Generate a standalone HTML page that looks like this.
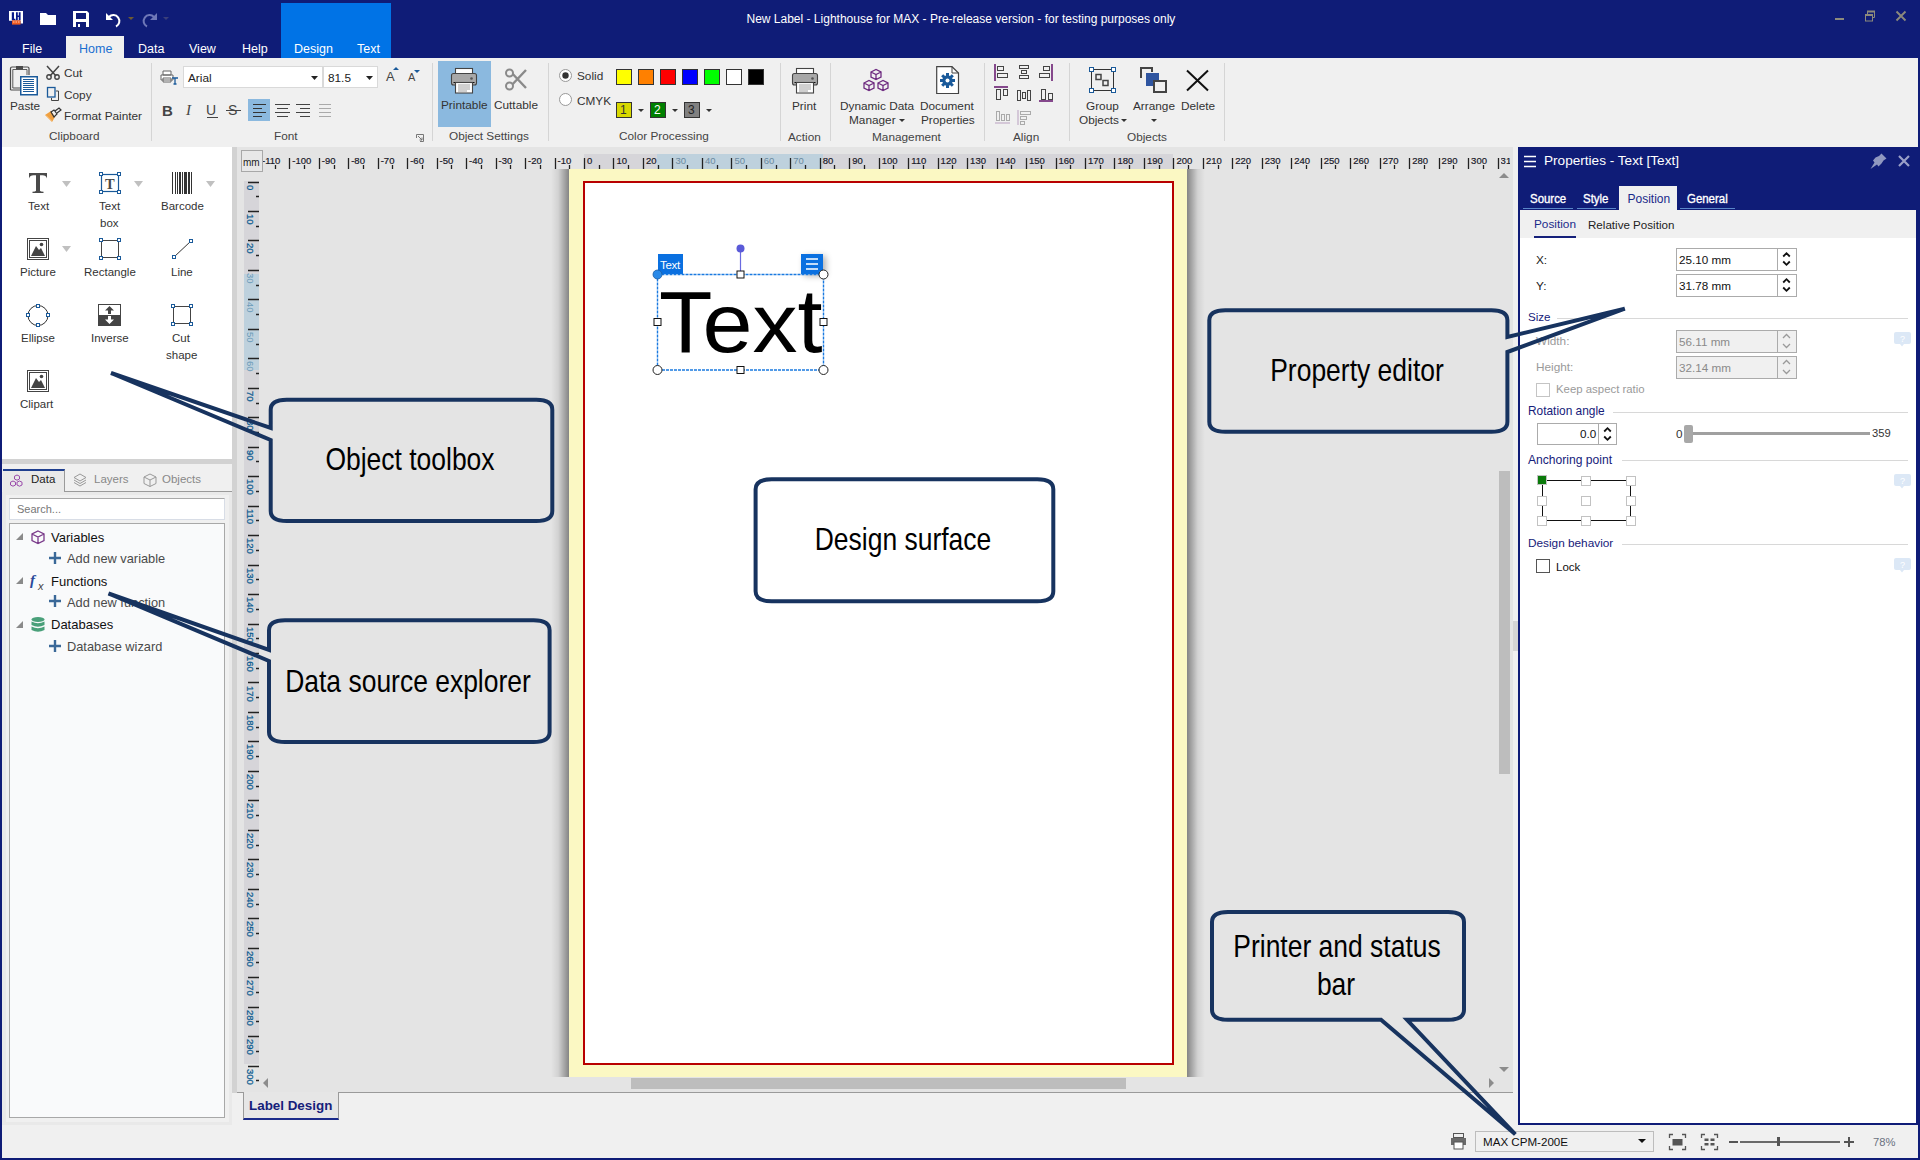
<!DOCTYPE html>
<html><head><meta charset="utf-8">
<style>
*{box-sizing:border-box;margin:0;padding:0}
html,body{width:1920px;height:1160px;overflow:hidden;background:#f0f0f0;font-family:"Liberation Sans",sans-serif;color:#1e1e1e}
.a{position:absolute}
.t{position:absolute;white-space:nowrap;line-height:1}
svg{position:absolute;overflow:visible}
</style></head><body>
<!-- window frame -->
<div class="a" style="left:0;top:0;width:1920px;height:58px;background:#0f1c77"></div>
<div class="a" style="left:0;top:0;width:2px;height:1160px;background:#0f1c77"></div>
<div class="a" style="left:1918px;top:0;width:2px;height:1160px;background:#0f1c77"></div>
<div class="a" style="left:0;top:1158px;width:1920px;height:2px;background:#0f1c77"></div>
<!-- contextual tab area -->
<div class="a" style="left:281px;top:3px;width:110px;height:55px;background:#0073e6"></div>
<div class="t" style="left:746.5px;top:13px;font-size:12px;color:#fff">New Label - Lighthouse for MAX - Pre-release version - for testing purposes only</div>
<!-- tabs -->
<div class="a" style="left:66px;top:36px;width:58px;height:22px;background:#f0f0f0"></div>
<div class="t" style="left:22px;top:43px;font-size:12.5px;color:#fff">File</div>
<div class="t" style="left:79px;top:43px;font-size:12.5px;color:#1a6fd0">Home</div>
<div class="t" style="left:138px;top:43px;font-size:12.5px;color:#fff">Data</div>
<div class="t" style="left:189px;top:43px;font-size:12.5px;color:#fff">View</div>
<div class="t" style="left:242px;top:43px;font-size:12.5px;color:#fff">Help</div>
<div class="t" style="left:294px;top:43px;font-size:12.5px;color:#fff">Design</div>
<div class="t" style="left:357px;top:43px;font-size:12.5px;color:#fff">Text</div>
<!-- ribbon -->
<div class="a" style="left:2px;top:58px;width:1916px;height:89px;background:#f0f0f0"></div>

<!-- ===== quick access ===== -->
<svg style="left:9px;top:11px" width="15" height="14">
 <path d="M0 0H14V12.6H11.5V9.8H0Z" fill="#fff"/>
 <path d="M2.8 1.2H5V7.8H6.4V9.2H2.8Z" fill="#0a1a8a"/>
 <path d="M7 1.2H8.8V4.6H9.8V1.2H11.6V9.2H9.8V6H8.8V9.2H7Z" fill="#0a1a8a"/>
 <rect x="3" y="9.3" width="8.5" height="4.3" fill="#f05a20"/>
 <path d="M4 11H10.5" stroke="#ffd0b0" stroke-width="1.2" stroke-dasharray="1.5 1"/>
</svg>
<svg style="left:40px;top:13px" width="17" height="13"><path d="M0 0H6L8 2H16V12H0Z" fill="#fff"/></svg>
<svg style="left:73px;top:11px" width="17" height="17"><path d="M0 0H14L16 2V16H0Z" fill="#fff"/><rect x="3" y="2" width="10" height="6" fill="#0f1c77"/><rect x="3" y="11" width="10" height="5" fill="#0f1c77"/><rect x="5" y="13" width="2" height="3" fill="#fff"/></svg>
<svg style="left:106px;top:12px" width="18" height="16"><path d="M3 5 A6 6 0 1 1 10 14.5" fill="none" stroke="#fff" stroke-width="2"/><path d="M0 1V8H7Z" fill="#fff"/></svg>
<svg style="left:128px;top:17px" width="6" height="4"><path d="M0 0H6L3 3Z" fill="#6e5a30"/></svg>
<svg style="left:140px;top:12px" width="18" height="16"><path d="M14 5 A6 6 0 1 0 7 14.5" fill="none" stroke="#6f78b8" stroke-width="2"/><path d="M17 1V8H10Z" fill="#6f78b8"/></svg>
<svg style="left:163px;top:17px" width="6" height="4"><path d="M0 0H6L3 3Z" fill="#3a3f7a"/></svg>
<!-- window controls -->
<div class="a" style="left:1835px;top:18px;width:9px;height:2px;background:#8c8a7c"></div>
<svg style="left:1864px;top:10px" width="12" height="12"><path d="M3.5 4V1.5H10.5V7.5H8.5" fill="none" stroke="#8c8a7c" stroke-width="1"/><path d="M3 1.5H11" stroke="#8c8a7c" stroke-width="2"/><rect x="1.5" y="5.5" width="7" height="5.5" fill="none" stroke="#8c8a7c" stroke-width="1"/><path d="M1 5H9" stroke="#8c8a7c" stroke-width="2"/></svg>
<svg style="left:1895px;top:10px" width="12" height="12"><path d="M1.5 1.5L10.5 10.5M10.5 1.5L1.5 10.5" stroke="#8c8a7c" stroke-width="1.9"/></svg>

<!-- ===== ribbon: Clipboard ===== -->
<svg style="left:9px;top:65px" width="30" height="31">
 <path d="M1.5 25V3.5Q1.5 2 3 2H7.5M13.5 2H18.5Q20 2 20 3.5V10" fill="none" stroke="#4a4a4a" stroke-width="1.2"/>
 <path d="M3.8 23V4.5H18V10" fill="none" stroke="#4a4a4a" stroke-width="0.9"/>
 <path d="M1.5 25H11M3.8 23H11" fill="none" stroke="#4a4a4a" stroke-width="1"/>
 <rect x="7" y="1" width="7" height="3.5" fill="#4a4a4a"/>
 <rect x="11.75" y="11.75" width="16.5" height="18" fill="#fff" stroke="#1a5a9a" stroke-width="1.5"/>
 <path d="M14 14.5H25M14 16.5H25M14 18.5H25M14 20.5H25M14 22.5H25M14 24.5H25M14 26.5H25" stroke="#1a5a9a" stroke-width="1"/>
</svg>
<div class="t" style="left:10px;top:101px;font-size:11.8px;color:#333">Paste</div>
<svg style="left:46px;top:66px" width="15" height="14"><path d="M1 0L10 10M13 0L4 10" stroke="#444" stroke-width="1.5"/><circle cx="3" cy="11" r="2.2" fill="none" stroke="#444" stroke-width="1.4"/><circle cx="11" cy="11" r="2.2" fill="none" stroke="#444" stroke-width="1.4"/></svg>
<div class="t" style="left:64px;top:68px;font-size:11.8px;color:#333">Cut</div>
<svg style="left:47px;top:87px" width="13" height="15"><rect x="0.5" y="0.5" width="7.5" height="9.5" fill="none" stroke="#1a5a9a" stroke-width="1.3"/><path d="M9 4H11.5V13.5H4.5V11" fill="none" stroke="#444" stroke-width="1"/></svg>
<div class="t" style="left:64px;top:90px;font-size:11.8px;color:#333">Copy</div>
<svg style="left:45px;top:108px" width="17" height="16"><path d="M0 7L6 3L10 9L7 14Z" fill="#f0a040"/><path d="M1 7.5L6.5 13" stroke="#f7c890" stroke-width="1"/><path d="M6 4L9 2L12 6L9 9Z" fill="none" stroke="#333" stroke-width="1.2"/><path d="M10 3L14 0L16 2L12 5" fill="none" stroke="#333" stroke-width="1.2"/></svg>
<div class="t" style="left:64px;top:111px;font-size:11.8px;color:#333">Format Painter</div>
<div class="t" style="left:49px;top:131px;font-size:11.8px;color:#444">Clipboard</div>
<div class="a" style="left:151px;top:63px;width:1px;height:78px;background:#d5d5d5"></div>

<!-- ===== ribbon: Font ===== -->
<svg style="left:161px;top:70px" width="18" height="15"><path d="M2 1H10V5H2Z M0 5H12V10H0Z M2 8H10V12H2Z" fill="#fff" stroke="#666" stroke-width="1"/><path d="M11 8H17M14 8V14M12.5 14H15.5" stroke="#1a5a9a" stroke-width="1.3"/></svg>
<div class="a" style="left:183px;top:66px;width:140px;height:22px;background:#fff;border:1px solid #d9d9d9"></div>
<div class="t" style="left:188px;top:73px;font-size:11.8px;color:#222">Arial</div>
<svg style="left:311px;top:76px" width="7" height="5"><path d="M0 0H7L3.5 4Z" fill="#222"/></svg>
<div class="a" style="left:323px;top:66px;width:55px;height:22px;background:#fff;border:1px solid #d9d9d9"></div>
<div class="t" style="left:328px;top:73px;font-size:11.8px;color:#222">81.5</div>
<svg style="left:366px;top:76px" width="7" height="5"><path d="M0 0H7L3.5 4Z" fill="#222"/></svg>
<div class="t" style="left:386px;top:70px;font-size:13px;color:#444">A</div>
<svg style="left:393px;top:67px" width="6" height="4"><path d="M0 3H6L3 0Z" fill="#1a5a9a"/></svg>
<div class="t" style="left:408px;top:72px;font-size:11px;color:#444">A</div>
<svg style="left:414px;top:70px" width="6" height="4"><path d="M0 0H6L3 3Z" fill="#1a5a9a"/></svg>
<div class="t" style="left:162px;top:103px;font-size:15px;font-weight:bold;color:#444">B</div>
<div class="t" style="left:186px;top:103px;font-size:15px;font-style:italic;font-family:'Liberation Serif',serif;color:#444">I</div>
<div class="t" style="left:206px;top:103px;font-size:14px;color:#444">U</div>
<div class="a" style="left:207px;top:117px;width:11px;height:1px;background:#444"></div>
<div class="t" style="left:228px;top:103px;font-size:14px;color:#444">S</div>
<div class="a" style="left:226px;top:110px;width:15px;height:1px;background:#444"></div>
<div class="a" style="left:248px;top:99px;width:22px;height:22px;background:#8bb9df"></div>
<svg style="left:253px;top:104px" width="80" height="14">
 <path d="M0 0.5H13M0 4.5H9M0 8.5H13M0 12.5H9" stroke="#333" stroke-width="1.2"/>
 <path d="M22 0.5H37M24 4.5H35M22 8.5H37M24 12.5H35" stroke="#444" stroke-width="1.2"/>
 <path d="M43 0.5H57M47 4.5H57M43 8.5H57M47 12.5H57" stroke="#444" stroke-width="1.2"/>
 <path d="M66 0.5H78M66 4.5H78M66 8.5H78M66 12.5H78" stroke="#aaa" stroke-width="1.2"/>
</svg>
<div class="t" style="left:274px;top:131px;font-size:11.8px;color:#444">Font</div>
<svg style="left:416px;top:134px" width="8" height="8"><path d="M0.5 4V0.5H7.5V7.5H4" fill="none" stroke="#777"/><path d="M2 2L6 6M6 3.5V6H3.5" fill="none" stroke="#777"/></svg>
<div class="a" style="left:432px;top:63px;width:1px;height:78px;background:#d5d5d5"></div>

<!-- ===== ribbon: Object Settings ===== -->
<div class="a" style="left:438px;top:61px;width:53px;height:66px;background:#8bb9df"></div>
<svg style="left:450px;top:67px" width="28" height="27">
 <rect x="5.5" y="1.5" width="17" height="5.5" fill="#fff" stroke="#444" stroke-width="1.1"/>
 <rect x="1.5" y="6.5" width="25" height="11.5" rx="2" fill="#a8a8a8" stroke="#444" stroke-width="1.1"/>
 <circle cx="21.5" cy="11.5" r="1.3" fill="#555"/>
 <path d="M3.5 15.5H24.5" stroke="#111" stroke-width="1"/>
 <rect x="5.5" y="15.5" width="17" height="10.5" fill="#fff" stroke="#444" stroke-width="1.1"/>
 <path d="M8 18H20M8 20H20M8 22H20M8 24H17" stroke="#888" stroke-width="0.8"/>
</svg>
<div class="t" style="left:441px;top:100px;font-size:11.8px;color:#333">Printable</div>
<svg style="left:505px;top:68px" width="23" height="24"><path d="M4 20L21 2M4 2L21 20" stroke="#8a8a8a" stroke-width="2.4"/><circle cx="4.5" cy="5" r="3.5" fill="#f0f0f0" stroke="#8a8a8a" stroke-width="2"/><circle cx="4.5" cy="18" r="3.5" fill="#f0f0f0" stroke="#8a8a8a" stroke-width="2"/></svg>
<div class="t" style="left:494px;top:100px;font-size:11.8px;color:#333">Cuttable</div>
<div class="t" style="left:449px;top:131px;font-size:11.8px;color:#444">Object Settings</div>
<div class="a" style="left:548px;top:63px;width:1px;height:78px;background:#d5d5d5"></div>

<!-- ===== ribbon: Color Processing ===== -->
<svg style="left:559px;top:69px" width="14" height="38"><circle cx="6.5" cy="6.5" r="6" fill="#fff" stroke="#999" stroke-width="1"/><circle cx="6.5" cy="6.5" r="3.2" fill="#333"/><circle cx="6.5" cy="30.5" r="6" fill="#fff" stroke="#999" stroke-width="1"/></svg>
<div class="t" style="left:577px;top:71px;font-size:11.8px;color:#333">Solid</div>
<div class="t" style="left:577px;top:96px;font-size:11.8px;color:#333">CMYK</div>
<div class="a" style="left:616px;top:69px;width:16px;height:16px;background:#ffff00;border:1px solid #333"></div>
<div class="a" style="left:638px;top:69px;width:16px;height:16px;background:#ff8000;border:1px solid #333"></div>
<div class="a" style="left:660px;top:69px;width:16px;height:16px;background:#ff0000;border:1px solid #333"></div>
<div class="a" style="left:682px;top:69px;width:16px;height:16px;background:#0000ff;border:1px solid #333"></div>
<div class="a" style="left:704px;top:69px;width:16px;height:16px;background:#00ff00;border:1px solid #333"></div>
<div class="a" style="left:726px;top:69px;width:16px;height:16px;background:#ffffff;border:1px solid #333"></div>
<div class="a" style="left:748px;top:69px;width:16px;height:16px;background:#000000;border:1px solid #333"></div>
<div class="a" style="left:616px;top:102px;width:16px;height:16px;background:#d8d800;border:1px solid #333"></div>
<div class="t" style="left:620px;top:104px;font-size:12px;color:#333">1</div>
<svg style="left:638px;top:109px" width="6" height="4"><path d="M0 0H6L3 3Z" fill="#333"/></svg>
<div class="a" style="left:650px;top:102px;width:16px;height:16px;background:#008000;border:1px solid #333"></div>
<div class="t" style="left:654px;top:104px;font-size:12px;color:#fff">2</div>
<svg style="left:672px;top:109px" width="6" height="4"><path d="M0 0H6L3 3Z" fill="#333"/></svg>
<div class="a" style="left:684px;top:102px;width:16px;height:16px;background:#808080;border:1px solid #333"></div>
<div class="t" style="left:688px;top:104px;font-size:12px;color:#222">3</div>
<svg style="left:706px;top:109px" width="6" height="4"><path d="M0 0H6L3 3Z" fill="#333"/></svg>
<div class="t" style="left:619px;top:131px;font-size:11.8px;color:#444">Color Processing</div>
<div class="a" style="left:780px;top:63px;width:1px;height:78px;background:#d5d5d5"></div>

<!-- ===== ribbon: Action ===== -->
<svg style="left:791px;top:67px" width="28" height="27">
 <rect x="5.5" y="1.5" width="17" height="5.5" fill="#fff" stroke="#444" stroke-width="1.1"/>
 <rect x="1.5" y="6.5" width="25" height="11.5" rx="2" fill="#a8a8a8" stroke="#444" stroke-width="1.1"/>
 <circle cx="21.5" cy="11.5" r="1.3" fill="#555"/>
 <path d="M3.5 15.5H24.5" stroke="#111" stroke-width="1"/>
 <rect x="5.5" y="15.5" width="17" height="10.5" fill="#fff" stroke="#444" stroke-width="1.1"/>
 <path d="M8 18H20M8 20H20M8 22H20M8 24H17" stroke="#888" stroke-width="0.8"/>
</svg>
<div class="t" style="left:792px;top:101px;font-size:11.8px;color:#333">Print</div>
<div class="t" style="left:788px;top:132px;font-size:11.8px;color:#444">Action</div>
<div class="a" style="left:830px;top:63px;width:1px;height:78px;background:#d5d5d5"></div>

<!-- ===== ribbon: Management ===== -->
<svg style="left:863px;top:67px" width="27" height="27" fill="none" stroke="#6e2a80" stroke-width="1.3">
 <path d="M8 5L13 2.5L18 5V10L13 12.5L8 10Z M8 5L13 7.5L18 5 M13 7.5V12.5"/>
 <path d="M1 16L6 13.5L11 16V21L6 23.5L1 21Z M1 16L6 18.5L11 16 M6 18.5V23.5"/>
 <path d="M15 16L20 13.5L25 16V21L20 23.5L15 21Z M15 16L20 18.5L25 16 M20 18.5V23.5"/>
</svg>
<div class="t" style="left:840px;top:101px;font-size:11.8px;color:#333">Dynamic Data</div>
<div class="t" style="left:849px;top:115px;font-size:11.8px;color:#333">Manager</div>
<svg style="left:899px;top:119px" width="6" height="4"><path d="M0 0H6L3 3Z" fill="#333"/></svg>
<svg style="left:936px;top:66px" width="24" height="29">
 <path d="M0.7 0.7H16L22.5 7V27.5H0.7Z" fill="#fff" stroke="#444" stroke-width="1.2"/>
 <path d="M16 0.7V7H22.5" fill="none" stroke="#444" stroke-width="1"/>
 <g transform="translate(11.5,14.5)" fill="#1a5a9a"><circle r="5.2"/><path d="M-1.5 -7.5H1.5V7.5H-1.5Z M-7.5 -1.5V1.5H7.5V-1.5Z" /><path d="M-1.5 -7.5H1.5V7.5H-1.5Z" transform="rotate(45)"/><path d="M-1.5 -7.5H1.5V7.5H-1.5Z" transform="rotate(-45)"/><circle r="2" fill="#fff"/></g>
</svg>
<div class="t" style="left:920px;top:101px;font-size:11.8px;color:#333">Document</div>
<div class="t" style="left:921px;top:115px;font-size:11.8px;color:#333">Properties</div>
<div class="t" style="left:872px;top:132px;font-size:11.8px;color:#444">Management</div>
<div class="a" style="left:984px;top:63px;width:1px;height:78px;background:#d5d5d5"></div>

<!-- ===== ribbon: Align ===== -->
<svg style="left:994px;top:64px" width="62" height="62" fill="none" stroke-width="1">
 <path d="M1 0V17" stroke="#6b1f73" stroke-width="1.6"/><rect x="3.5" y="2.5" width="6" height="4" stroke="#444"/><rect x="3.5" y="9.5" width="10" height="4" stroke="#444"/>
 <rect x="25.5" y="1.5" width="9" height="3" stroke="#444"/><rect x="27.5" y="6.5" width="5" height="3" stroke="#444"/><rect x="25.5" y="11.5" width="9" height="3" stroke="#444"/>
 <path d="M58 0V17" stroke="#6b1f73" stroke-width="1.6"/><rect x="49.5" y="2.5" width="6" height="4" stroke="#444"/><rect x="45.5" y="9.5" width="10" height="4" stroke="#444"/>
 <path d="M0 23H14" stroke="#6b1f73" stroke-width="1.6"/><rect x="2.5" y="25.5" width="4" height="10" stroke="#444"/><rect x="9.5" y="25.5" width="4" height="6" stroke="#444"/>
 <rect x="23.5" y="26.5" width="3" height="10" stroke="#444"/><rect x="28.5" y="28.5" width="3" height="6" stroke="#444"/><rect x="33.5" y="26.5" width="3" height="10" stroke="#444"/>
 <path d="M45 37H59" stroke="#6b1f73" stroke-width="1.6"/><rect x="47.5" y="25.5" width="4" height="10" stroke="#444"/><rect x="54.5" y="29.5" width="4" height="6" stroke="#444"/>
 <rect x="2.5" y="47.5" width="3" height="9" stroke="#aaa"/><rect x="7.5" y="50.5" width="3" height="6" stroke="#aaa"/><rect x="12.5" y="50.5" width="3" height="6" stroke="#aaa"/><path d="M1 59H16" stroke="#b9a0c0"/>
 <path d="M24 46V61" stroke="#b9a0c0"/><rect x="26.5" y="47.5" width="10" height="3" stroke="#aaa"/><rect x="26.5" y="52.5" width="6" height="3" stroke="#aaa"/><rect x="26.5" y="57.5" width="4" height="3" stroke="#aaa"/>
</svg>
<div class="t" style="left:1013px;top:132px;font-size:11.8px;color:#444">Align</div>
<div class="a" style="left:1069px;top:63px;width:1px;height:78px;background:#d5d5d5"></div>

<!-- ===== ribbon: Objects ===== -->
<svg style="left:1089px;top:67px" width="28" height="27">
 <rect x="2.5" y="2.5" width="22" height="21" fill="none" stroke="#333" stroke-width="1"/>
 <rect x="0.5" y="0.5" width="4" height="4" fill="#fff" stroke="#1a5a9a" stroke-width="1"/><rect x="22.5" y="0.5" width="4" height="4" fill="#fff" stroke="#1a5a9a"/><rect x="0.5" y="21.5" width="4" height="4" fill="#fff" stroke="#1a5a9a"/><rect x="22.5" y="21.5" width="4" height="4" fill="#fff" stroke="#1a5a9a"/>
 <rect x="7" y="7.5" width="5" height="5" fill="none" stroke="#444" stroke-width="1.5"/><rect x="14" y="13.5" width="5" height="5" fill="none" stroke="#444" stroke-width="1.5"/>
</svg>
<div class="t" style="left:1086px;top:101px;font-size:11.8px;color:#333">Group</div>
<div class="t" style="left:1079px;top:115px;font-size:11.8px;color:#333">Objects</div>
<svg style="left:1121px;top:119px" width="6" height="4"><path d="M0 0H6L3 3Z" fill="#333"/></svg>
<svg style="left:1140px;top:67px" width="28" height="27">
 <path d="M1 11V1H12V5" fill="none" stroke="#444" stroke-width="2"/>
 <rect x="6" y="6" width="13" height="13" fill="#2f55a0"/>
 <rect x="14" y="14" width="12" height="11" fill="#f0f0f0" stroke="#444" stroke-width="2"/>
</svg>
<div class="t" style="left:1133px;top:101px;font-size:11.8px;color:#333">Arrange</div>
<svg style="left:1151px;top:119px" width="6" height="4"><path d="M0 0H6L3 3Z" fill="#333"/></svg>
<svg style="left:1186px;top:70px" width="23" height="21"><path d="M1 0.5L22 20.5M22 0.5L1 20.5" stroke="#111" stroke-width="2"/></svg>
<div class="t" style="left:1181px;top:101px;font-size:11.8px;color:#333">Delete</div>
<div class="t" style="left:1127px;top:132px;font-size:11.8px;color:#444">Objects</div>
<div class="a" style="left:1224px;top:63px;width:1px;height:78px;background:#d5d5d5"></div>

<!-- left panel -->
<!-- ===== left panel: toolbox ===== -->
<div class="a" style="left:2px;top:147px;width:230px;height:312px;background:#fff"></div>
<svg style="left:28px;top:172px" width="20" height="22"><path d="M1 1H19V6.5Q18 3.2 14.5 3.2H12V18.8Q12.3 19.6 15.5 19.8V21H4.5V19.8Q7.7 19.6 8 18.8V3.2H5.5Q2 3.2 1 6.5Z" fill="#4a4a4a"/></svg>
<svg style="left:62px;top:181px" width="9" height="7"><path d="M0 0H9L4.5 6Z" fill="#c0c0c0"/></svg>
<svg style="left:99px;top:172px" width="23" height="22">
 <rect x="2.5" y="2.5" width="17" height="17" fill="none" stroke="#1a5a9a" stroke-width="1.2"/>
 <rect x="0.5" y="0.5" width="3" height="3" fill="#fff" stroke="#1a5a9a"/><rect x="18.5" y="0.5" width="3" height="3" fill="#fff" stroke="#1a5a9a"/><rect x="0.5" y="18.5" width="3" height="3" fill="#fff" stroke="#1a5a9a"/><rect x="18.5" y="18.5" width="3" height="3" fill="#fff" stroke="#1a5a9a"/>
</svg>
<div class="t" style="left:105px;top:177px;font-size:14.5px;font-family:'Liberation Serif',serif;font-weight:bold;color:#4a4a4a">T</div>
<svg style="left:134px;top:181px" width="9" height="7"><path d="M0 0H9L4.5 6Z" fill="#c0c0c0"/></svg>
<svg style="left:172px;top:172px" width="21" height="22"><rect x="0" y="0" width="1" height="22" fill="#333"/><rect x="3" y="0" width="1" height="22" fill="#333"/><rect x="5" y="0" width="1" height="22" fill="#333"/><rect x="7" y="0" width="2" height="22" fill="#333"/><rect x="10" y="0" width="1" height="22" fill="#333"/><rect x="12" y="0" width="3" height="22" fill="#333"/><rect x="16" y="0" width="2" height="22" fill="#333"/><rect x="19" y="0" width="1" height="22" fill="#333"/></svg>
<svg style="left:206px;top:181px" width="9" height="7"><path d="M0 0H9L4.5 6Z" fill="#c0c0c0"/></svg>
<div class="t" style="left:28px;top:201px;font-size:11.5px;color:#333">Text</div>
<div class="t" style="left:99px;top:201px;font-size:11.5px;color:#333">Text</div>
<div class="t" style="left:100px;top:218px;font-size:11.5px;color:#333">box</div>
<div class="t" style="left:161px;top:201px;font-size:11.5px;color:#333">Barcode</div>
<!-- row 2 -->
<svg style="left:27px;top:238px" width="23" height="23">
 <rect x="0.5" y="0.5" width="21" height="21" fill="#fff" stroke="#444" stroke-width="1"/>
 <rect x="2.5" y="2.5" width="17" height="17" fill="none" stroke="#444" stroke-width="1"/>
 <path d="M4 18L9 8L12 12L14 10L18 18Z" fill="#444"/><circle cx="14.5" cy="6.5" r="1.8" fill="#444"/>
</svg>
<svg style="left:62px;top:246px" width="9" height="7"><path d="M0 0H9L4.5 6Z" fill="#c0c0c0"/></svg>
<svg style="left:99px;top:238px" width="23" height="22">
 <rect x="2.5" y="2.5" width="17" height="17" fill="none" stroke="#444" stroke-width="1"/>
 <rect x="0.5" y="0.5" width="3" height="3" fill="#fff" stroke="#1a5a9a"/><rect x="18.5" y="0.5" width="3" height="3" fill="#fff" stroke="#1a5a9a"/><rect x="0.5" y="18.5" width="3" height="3" fill="#fff" stroke="#1a5a9a"/><rect x="18.5" y="18.5" width="3" height="3" fill="#fff" stroke="#1a5a9a"/>
</svg>
<svg style="left:172px;top:238px" width="22" height="22"><path d="M2 19L19 3" stroke="#333" stroke-width="1"/><rect x="0.5" y="17.5" width="3" height="3" fill="#fff" stroke="#1a5a9a"/><rect x="17.5" y="1.5" width="3" height="3" fill="#fff" stroke="#1a5a9a"/></svg>
<div class="t" style="left:20px;top:267px;font-size:11.5px;color:#333">Picture</div>
<div class="t" style="left:84px;top:267px;font-size:11.5px;color:#333">Rectangle</div>
<div class="t" style="left:171px;top:267px;font-size:11.5px;color:#333">Line</div>
<!-- row 3 -->
<svg style="left:26px;top:304px" width="25" height="23">
 <ellipse cx="12" cy="11.5" rx="10" ry="10" fill="none" stroke="#333" stroke-width="1"/>
 <rect x="10.5" y="0.5" width="3" height="3" fill="#fff" stroke="#1a5a9a"/><rect x="10.5" y="19.5" width="3" height="3" fill="#fff" stroke="#1a5a9a"/><rect x="0.5" y="9.5" width="3" height="3" fill="#fff" stroke="#1a5a9a"/><rect x="20.5" y="9.5" width="3" height="3" fill="#fff" stroke="#1a5a9a"/>
</svg>
<svg style="left:98px;top:304px" width="24" height="23">
 <rect x="0.5" y="0.5" width="22" height="21" fill="#fff" stroke="#444" stroke-width="1"/>
 <rect x="0" y="11" width="23" height="11" fill="#444"/>
 <path d="M11.5 2L7 6.5H10V10H13V6.5H16Z" fill="#444"/><path d="M11.5 20L7 15.5H10V12H13V15.5H16Z" fill="#fff"/>
</svg>
<svg style="left:171px;top:304px" width="22" height="22">
 <rect x="2.5" y="2.5" width="17" height="17" fill="none" stroke="#444" stroke-width="1"/>
 <rect x="0.5" y="0.5" width="3" height="3" fill="#fff" stroke="#1a5a9a"/><rect x="18.5" y="0.5" width="3" height="3" fill="#fff" stroke="#1a5a9a"/><rect x="0.5" y="18.5" width="3" height="3" fill="#fff" stroke="#1a5a9a"/><rect x="18.5" y="18.5" width="3" height="3" fill="#fff" stroke="#1a5a9a"/>
</svg>
<div class="t" style="left:21px;top:333px;font-size:11.5px;color:#333">Ellipse</div>
<div class="t" style="left:91px;top:333px;font-size:11.5px;color:#333">Inverse</div>
<div class="t" style="left:172px;top:333px;font-size:11.5px;color:#333">Cut</div>
<div class="t" style="left:166px;top:350px;font-size:11.5px;color:#333">shape</div>
<!-- row 4 -->
<svg style="left:27px;top:370px" width="23" height="23">
 <rect x="0.5" y="0.5" width="21" height="21" fill="#fff" stroke="#444" stroke-width="1"/>
 <rect x="2.5" y="2.5" width="17" height="17" fill="none" stroke="#444" stroke-width="1"/>
 <path d="M4 18L9 8L12 12L14 10L18 18Z" fill="#444"/><circle cx="14.5" cy="6.5" r="1.8" fill="#444"/>
</svg>
<div class="t" style="left:20px;top:399px;font-size:11.5px;color:#333">Clipart</div>

<!-- splitter -->
<div class="a" style="left:2px;top:459px;width:230px;height:5px;background:#d2d2d2"></div>
<!-- tabs -->
<div class="a" style="left:2px;top:464px;width:230px;height:28px;background:#f0f0f0"></div>
<div class="a" style="left:3px;top:469px;width:62px;height:23px;background:#e9e9e9;border-top:2px solid #1f3f8f;border-right:1px solid #9a9a9a"></div>
<div class="a" style="left:64px;top:491px;width:168px;height:1px;background:#9a9a9a"></div>
<svg style="left:10px;top:474px" width="14" height="13" fill="none" stroke="#9a4aaa" stroke-width="1"><path d="M4.5 1L7 2.2V5L4.5 6.2L2 5V2.2Z" transform="translate(2.5,0)"/><path d="M4.5 1L7 2.2V5L4.5 6.2L2 5V2.2Z" transform="translate(-1.5,6)"/><path d="M4.5 1L7 2.2V5L4.5 6.2L2 5V2.2Z" transform="translate(5,6)"/></svg>
<div class="t" style="left:31px;top:474px;font-size:11.5px;color:#222">Data</div>
<svg style="left:73px;top:473px" width="14" height="14" fill="none" stroke="#999" stroke-width="1"><path d="M7 1L13 4.5L7 8L1 4.5Z"/><path d="M1 7L7 10.5L13 7"/><path d="M1 9.5L7 13L13 9.5"/></svg>
<div class="t" style="left:94px;top:474px;font-size:11.5px;color:#888">Layers</div>
<svg style="left:143px;top:473px" width="14" height="14" fill="none" stroke="#999" stroke-width="1"><path d="M7 1L13 4V10.5L7 13.5L1 10.5V4Z M1 4L7 7L13 4 M7 7V13.5"/></svg>
<div class="t" style="left:162px;top:474px;font-size:11.5px;color:#888">Objects</div>
<!-- data panel bg -->
<div class="a" style="left:2px;top:492px;width:230px;height:633px;background:#e9e9e9"></div>
<div class="a" style="left:6px;top:495px;width:223px;height:627px;background:#f0f0f0"></div>
<div class="a" style="left:9px;top:498px;width:216px;height:22px;background:#fff;border:1px solid #d8dde6;border-top-color:#a8a8a8"></div>
<div class="t" style="left:17px;top:504px;font-size:11px;color:#777">Search...</div>
<div class="a" style="left:9px;top:523px;width:216px;height:595px;background:#f9fafb;border:1px solid #a8a8a8"></div>
<!-- tree -->
<svg style="left:16px;top:532px" width="8" height="100"><path d="M7 1V8H0Z" fill="#8a8a8a"/><path d="M7 45V52H0Z" fill="#8a8a8a"/><path d="M7 89V96H0Z" fill="#8a8a8a"/></svg>
<svg style="left:31px;top:530px" width="15" height="15" fill="none" stroke="#7a3a8a" stroke-width="1.3"><path d="M7 1L13 4V10.5L7 13.5L1 10.5V4Z M1 4L7 7L13 4 M7 7V13.5"/></svg>
<div class="t" style="left:51px;top:531px;font-size:13px;color:#111">Variables</div>
<svg style="left:49px;top:552px" width="12" height="12"><path d="M6 0V12M0 6H12" stroke="#3a6898" stroke-width="2.4"/></svg>
<div class="t" style="left:67px;top:553px;font-size:12.8px;color:#4a4a4a">Add new variable</div>
<div class="t" style="left:30px;top:573px;font-size:15px;font-style:italic;font-weight:bold;font-family:'Liberation Serif',serif;color:#2a4a9a">f</div>
<div class="t" style="left:38px;top:581px;font-size:11px;font-style:italic;color:#444">x</div>
<div class="t" style="left:51px;top:575px;font-size:13px;color:#111">Functions</div>
<svg style="left:49px;top:595px" width="12" height="12"><path d="M6 0V12M0 6H12" stroke="#3a6898" stroke-width="2.4"/></svg>
<div class="t" style="left:67px;top:596.5px;font-size:12.8px;color:#4a4a4a">Add new function</div>
<svg style="left:31px;top:617px" width="14" height="16"><ellipse cx="7" cy="2.5" rx="6.5" ry="2.5" fill="#4aa07a"/><path d="M0.5 4.5Q7 8 13.5 4.5V8Q7 11.5 0.5 8Z" fill="#4aa07a"/><path d="M0.5 9.5Q7 13 13.5 9.5V13Q7 16.5 0.5 13Z" fill="#4aa07a"/></svg>
<div class="t" style="left:51px;top:618px;font-size:13px;color:#111">Databases</div>
<svg style="left:49px;top:640px" width="12" height="12"><path d="M6 0V12M0 6H12" stroke="#3a6898" stroke-width="2.4"/></svg>
<div class="t" style="left:67px;top:640.5px;font-size:12.8px;color:#4a4a4a">Database wizard</div>

<div class="a" style="left:232px;top:147px;width:5px;height:946px;background:#d2d2d2"></div>
<!-- canvas -->
<div class="a" style="left:237px;top:147px;width:1276px;height:945px;background:#e4e4e4"></div>
<div class="a" style="left:237px;top:1092px;width:1276px;height:1px;background:#9a9a9a"></div>
<!-- ===== canvas ===== -->
<div class="a" style="left:584px;top:154px;width:589px;height:15px;background:#d6d5d9"></div>
<div class="a" style="left:657px;top:154px;width:166px;height:15px;background:#bed1dd"></div>
<div class="a" style="left:244px;top:181px;width:15px;height:883px;background:#d6d5d9"></div>
<div class="a" style="left:244px;top:274px;width:15px;height:96px;background:#bed1dd"></div>
<svg style="left:0;top:0" width="1512" height="170"><path d="M275.5 165V169 M289.5 158V169 M304.5 165V169 M319.5 158V169 M334.5 165V169 M348.5 158V169 M363.5 165V169 M378.5 158V169 M392.5 165V169 M407.5 158V169 M422.5 165V169 M437.5 158V169 M451.5 165V169 M466.5 158V169 M481.5 165V169 M496.5 158V169 M510.5 165V169 M525.5 158V169 M540.5 165V169 M555.5 158V169 M569.5 165V169 M584.5 158V169 M599.5 165V169 M613.5 158V169 M628.5 165V169 M643.5 158V169 M658.5 165V169 M672.5 158V169 M687.5 165V169 M702.5 158V169 M717.5 165V169 M731.5 158V169 M746.5 165V169 M761.5 158V169 M776.5 165V169 M790.5 158V169 M805.5 165V169 M820.5 158V169 M834.5 165V169 M849.5 158V169 M864.5 165V169 M879.5 158V169 M893.5 165V169 M908.5 158V169 M923.5 165V169 M938.5 158V169 M952.5 165V169 M967.5 158V169 M982.5 165V169 M997.5 158V169 M1011.5 165V169 M1026.5 158V169 M1041.5 165V169 M1056.5 158V169 M1070.5 165V169 M1085.5 158V169 M1100.5 165V169 M1114.5 158V169 M1129.5 165V169 M1144.5 158V169 M1159.5 165V169 M1173.5 158V169 M1188.5 165V169 M1203.5 158V169 M1218.5 165V169 M1232.5 158V169 M1247.5 165V169 M1262.5 158V169 M1277.5 165V169 M1291.5 158V169 M1306.5 165V169 M1321.5 158V169 M1335.5 165V169 M1350.5 158V169 M1365.5 165V169 M1380.5 158V169 M1394.5 165V169 M1409.5 158V169 M1424.5 165V169 M1439.5 158V169 M1453.5 165V169 M1468.5 158V169 M1483.5 165V169 M1498.5 158V169" stroke="#222" stroke-width="1.3"/></svg>
<div class="t" style="left:262.0px;top:156px;font-size:9.5px;color:#1a1a2a;-webkit-text-stroke:0.2px #1a1a2a">-110</div>
<div class="t" style="left:292.3px;top:156px;font-size:9.5px;color:#1a1a2a;-webkit-text-stroke:0.2px #1a1a2a">-100</div>
<div class="t" style="left:321.8px;top:156px;font-size:9.5px;color:#1a1a2a;-webkit-text-stroke:0.2px #1a1a2a">-90</div>
<div class="t" style="left:351.2px;top:156px;font-size:9.5px;color:#1a1a2a;-webkit-text-stroke:0.2px #1a1a2a">-80</div>
<div class="t" style="left:380.7px;top:156px;font-size:9.5px;color:#1a1a2a;-webkit-text-stroke:0.2px #1a1a2a">-70</div>
<div class="t" style="left:410.2px;top:156px;font-size:9.5px;color:#1a1a2a;-webkit-text-stroke:0.2px #1a1a2a">-60</div>
<div class="t" style="left:439.6px;top:156px;font-size:9.5px;color:#1a1a2a;-webkit-text-stroke:0.2px #1a1a2a">-50</div>
<div class="t" style="left:469.1px;top:156px;font-size:9.5px;color:#1a1a2a;-webkit-text-stroke:0.2px #1a1a2a">-40</div>
<div class="t" style="left:498.6px;top:156px;font-size:9.5px;color:#1a1a2a;-webkit-text-stroke:0.2px #1a1a2a">-30</div>
<div class="t" style="left:528.1px;top:156px;font-size:9.5px;color:#1a1a2a;-webkit-text-stroke:0.2px #1a1a2a">-20</div>
<div class="t" style="left:557.5px;top:156px;font-size:9.5px;color:#1a1a2a;-webkit-text-stroke:0.2px #1a1a2a">-10</div>
<div class="t" style="left:587.0px;top:156px;font-size:9.5px;color:#1a1a2a;-webkit-text-stroke:0.2px #1a1a2a">0</div>
<div class="t" style="left:616.5px;top:156px;font-size:9.5px;color:#1a1a2a;-webkit-text-stroke:0.2px #1a1a2a">10</div>
<div class="t" style="left:645.9px;top:156px;font-size:9.5px;color:#1a1a2a;-webkit-text-stroke:0.2px #1a1a2a">20</div>
<div class="t" style="left:675.4px;top:156px;font-size:9.5px;color:#6a8aa0">30</div>
<div class="t" style="left:704.9px;top:156px;font-size:9.5px;color:#6a8aa0">40</div>
<div class="t" style="left:734.4px;top:156px;font-size:9.5px;color:#6a8aa0">50</div>
<div class="t" style="left:763.8px;top:156px;font-size:9.5px;color:#6a8aa0">60</div>
<div class="t" style="left:793.3px;top:156px;font-size:9.5px;color:#6a8aa0">70</div>
<div class="t" style="left:822.8px;top:156px;font-size:9.5px;color:#1a1a2a;-webkit-text-stroke:0.2px #1a1a2a">80</div>
<div class="t" style="left:852.2px;top:156px;font-size:9.5px;color:#1a1a2a;-webkit-text-stroke:0.2px #1a1a2a">90</div>
<div class="t" style="left:881.7px;top:156px;font-size:9.5px;color:#1a1a2a;-webkit-text-stroke:0.2px #1a1a2a">100</div>
<div class="t" style="left:911.2px;top:156px;font-size:9.5px;color:#1a1a2a;-webkit-text-stroke:0.2px #1a1a2a">110</div>
<div class="t" style="left:940.6px;top:156px;font-size:9.5px;color:#1a1a2a;-webkit-text-stroke:0.2px #1a1a2a">120</div>
<div class="t" style="left:970.1px;top:156px;font-size:9.5px;color:#1a1a2a;-webkit-text-stroke:0.2px #1a1a2a">130</div>
<div class="t" style="left:999.6px;top:156px;font-size:9.5px;color:#1a1a2a;-webkit-text-stroke:0.2px #1a1a2a">140</div>
<div class="t" style="left:1029.0px;top:156px;font-size:9.5px;color:#1a1a2a;-webkit-text-stroke:0.2px #1a1a2a">150</div>
<div class="t" style="left:1058.5px;top:156px;font-size:9.5px;color:#1a1a2a;-webkit-text-stroke:0.2px #1a1a2a">160</div>
<div class="t" style="left:1088.0px;top:156px;font-size:9.5px;color:#1a1a2a;-webkit-text-stroke:0.2px #1a1a2a">170</div>
<div class="t" style="left:1117.5px;top:156px;font-size:9.5px;color:#1a1a2a;-webkit-text-stroke:0.2px #1a1a2a">180</div>
<div class="t" style="left:1146.9px;top:156px;font-size:9.5px;color:#1a1a2a;-webkit-text-stroke:0.2px #1a1a2a">190</div>
<div class="t" style="left:1176.4px;top:156px;font-size:9.5px;color:#1a1a2a;-webkit-text-stroke:0.2px #1a1a2a">200</div>
<div class="t" style="left:1205.9px;top:156px;font-size:9.5px;color:#1a1a2a;-webkit-text-stroke:0.2px #1a1a2a">210</div>
<div class="t" style="left:1235.3px;top:156px;font-size:9.5px;color:#1a1a2a;-webkit-text-stroke:0.2px #1a1a2a">220</div>
<div class="t" style="left:1264.8px;top:156px;font-size:9.5px;color:#1a1a2a;-webkit-text-stroke:0.2px #1a1a2a">230</div>
<div class="t" style="left:1294.3px;top:156px;font-size:9.5px;color:#1a1a2a;-webkit-text-stroke:0.2px #1a1a2a">240</div>
<div class="t" style="left:1323.8px;top:156px;font-size:9.5px;color:#1a1a2a;-webkit-text-stroke:0.2px #1a1a2a">250</div>
<div class="t" style="left:1353.2px;top:156px;font-size:9.5px;color:#1a1a2a;-webkit-text-stroke:0.2px #1a1a2a">260</div>
<div class="t" style="left:1382.7px;top:156px;font-size:9.5px;color:#1a1a2a;-webkit-text-stroke:0.2px #1a1a2a">270</div>
<div class="t" style="left:1412.2px;top:156px;font-size:9.5px;color:#1a1a2a;-webkit-text-stroke:0.2px #1a1a2a">280</div>
<div class="t" style="left:1441.6px;top:156px;font-size:9.5px;color:#1a1a2a;-webkit-text-stroke:0.2px #1a1a2a">290</div>
<div class="t" style="left:1471.1px;top:156px;font-size:9.5px;color:#1a1a2a;-webkit-text-stroke:0.2px #1a1a2a">300</div>
<div class="t" style="left:1500.6px;top:156px;font-size:9.5px;color:#1a1a2a;-webkit-text-stroke:0.2px #1a1a2a;width:9.4px;overflow:hidden">310</div>
<svg style="left:0;top:0" width="260" height="1090"><path d="M248 182.5H259 M256 196.5H259 M248 211.5H259 M256 226.5H259 M248 240.5H259 M256 255.5H259 M248 270.5H259 M256 285.5H259 M248 299.5H259 M256 314.5H259 M248 329.5H259 M256 344.5H259 M248 358.5H259 M256 373.5H259 M248 388.5H259 M256 403.5H259 M248 417.5H259 M256 432.5H259 M248 447.5H259 M256 461.5H259 M248 476.5H259 M256 491.5H259 M248 506.5H259 M256 520.5H259 M248 535.5H259 M256 550.5H259 M248 565.5H259 M256 579.5H259 M248 594.5H259 M256 609.5H259 M248 624.5H259 M256 638.5H259 M248 653.5H259 M256 668.5H259 M248 682.5H259 M256 697.5H259 M248 712.5H259 M256 727.5H259 M248 741.5H259 M256 756.5H259 M248 771.5H259 M256 786.5H259 M248 800.5H259 M256 815.5H259 M248 830.5H259 M256 845.5H259 M248 859.5H259 M256 874.5H259 M248 889.5H259 M256 904.5H259 M248 918.5H259 M256 933.5H259 M248 948.5H259 M256 962.5H259 M248 977.5H259 M256 992.5H259 M248 1007.5H259 M256 1021.5H259 M248 1036.5H259 M256 1051.5H259 M248 1066.5H259 M256 1080.5H259" stroke="#222" stroke-width="1.3"/></svg>
<div class="t" style="left:254.5px;top:184.5px;font-size:9.5px;color:#0a5a90;-webkit-text-stroke:0.25px #0a5a90;transform:rotate(90deg);transform-origin:0 0">0</div>
<div class="t" style="left:254.5px;top:214.0px;font-size:9.5px;color:#0a5a90;-webkit-text-stroke:0.25px #0a5a90;transform:rotate(90deg);transform-origin:0 0">10</div>
<div class="t" style="left:254.5px;top:243.4px;font-size:9.5px;color:#0a5a90;-webkit-text-stroke:0.25px #0a5a90;transform:rotate(90deg);transform-origin:0 0">20</div>
<div class="t" style="left:254.5px;top:272.9px;font-size:9.5px;color:#6a9ab8;transform:rotate(90deg);transform-origin:0 0">30</div>
<div class="t" style="left:254.5px;top:302.4px;font-size:9.5px;color:#6a9ab8;transform:rotate(90deg);transform-origin:0 0">40</div>
<div class="t" style="left:254.5px;top:331.9px;font-size:9.5px;color:#6a9ab8;transform:rotate(90deg);transform-origin:0 0">50</div>
<div class="t" style="left:254.5px;top:361.3px;font-size:9.5px;color:#6a9ab8;transform:rotate(90deg);transform-origin:0 0">60</div>
<div class="t" style="left:254.5px;top:390.8px;font-size:9.5px;color:#0a5a90;-webkit-text-stroke:0.25px #0a5a90;transform:rotate(90deg);transform-origin:0 0">70</div>
<div class="t" style="left:254.5px;top:420.3px;font-size:9.5px;color:#0a5a90;-webkit-text-stroke:0.25px #0a5a90;transform:rotate(90deg);transform-origin:0 0">80</div>
<div class="t" style="left:254.5px;top:449.7px;font-size:9.5px;color:#0a5a90;-webkit-text-stroke:0.25px #0a5a90;transform:rotate(90deg);transform-origin:0 0">90</div>
<div class="t" style="left:254.5px;top:479.2px;font-size:9.5px;color:#0a5a90;-webkit-text-stroke:0.25px #0a5a90;transform:rotate(90deg);transform-origin:0 0">100</div>
<div class="t" style="left:254.5px;top:508.7px;font-size:9.5px;color:#0a5a90;-webkit-text-stroke:0.25px #0a5a90;transform:rotate(90deg);transform-origin:0 0">110</div>
<div class="t" style="left:254.5px;top:538.1px;font-size:9.5px;color:#0a5a90;-webkit-text-stroke:0.25px #0a5a90;transform:rotate(90deg);transform-origin:0 0">120</div>
<div class="t" style="left:254.5px;top:567.6px;font-size:9.5px;color:#0a5a90;-webkit-text-stroke:0.25px #0a5a90;transform:rotate(90deg);transform-origin:0 0">130</div>
<div class="t" style="left:254.5px;top:597.1px;font-size:9.5px;color:#0a5a90;-webkit-text-stroke:0.25px #0a5a90;transform:rotate(90deg);transform-origin:0 0">140</div>
<div class="t" style="left:254.5px;top:626.5px;font-size:9.5px;color:#0a5a90;-webkit-text-stroke:0.25px #0a5a90;transform:rotate(90deg);transform-origin:0 0">150</div>
<div class="t" style="left:254.5px;top:656.0px;font-size:9.5px;color:#0a5a90;-webkit-text-stroke:0.25px #0a5a90;transform:rotate(90deg);transform-origin:0 0">160</div>
<div class="t" style="left:254.5px;top:685.5px;font-size:9.5px;color:#0a5a90;-webkit-text-stroke:0.25px #0a5a90;transform:rotate(90deg);transform-origin:0 0">170</div>
<div class="t" style="left:254.5px;top:715.0px;font-size:9.5px;color:#0a5a90;-webkit-text-stroke:0.25px #0a5a90;transform:rotate(90deg);transform-origin:0 0">180</div>
<div class="t" style="left:254.5px;top:744.4px;font-size:9.5px;color:#0a5a90;-webkit-text-stroke:0.25px #0a5a90;transform:rotate(90deg);transform-origin:0 0">190</div>
<div class="t" style="left:254.5px;top:773.9px;font-size:9.5px;color:#0a5a90;-webkit-text-stroke:0.25px #0a5a90;transform:rotate(90deg);transform-origin:0 0">200</div>
<div class="t" style="left:254.5px;top:803.4px;font-size:9.5px;color:#0a5a90;-webkit-text-stroke:0.25px #0a5a90;transform:rotate(90deg);transform-origin:0 0">210</div>
<div class="t" style="left:254.5px;top:832.8px;font-size:9.5px;color:#0a5a90;-webkit-text-stroke:0.25px #0a5a90;transform:rotate(90deg);transform-origin:0 0">220</div>
<div class="t" style="left:254.5px;top:862.3px;font-size:9.5px;color:#0a5a90;-webkit-text-stroke:0.25px #0a5a90;transform:rotate(90deg);transform-origin:0 0">230</div>
<div class="t" style="left:254.5px;top:891.8px;font-size:9.5px;color:#0a5a90;-webkit-text-stroke:0.25px #0a5a90;transform:rotate(90deg);transform-origin:0 0">240</div>
<div class="t" style="left:254.5px;top:921.2px;font-size:9.5px;color:#0a5a90;-webkit-text-stroke:0.25px #0a5a90;transform:rotate(90deg);transform-origin:0 0">250</div>
<div class="t" style="left:254.5px;top:950.7px;font-size:9.5px;color:#0a5a90;-webkit-text-stroke:0.25px #0a5a90;transform:rotate(90deg);transform-origin:0 0">260</div>
<div class="t" style="left:254.5px;top:980.2px;font-size:9.5px;color:#0a5a90;-webkit-text-stroke:0.25px #0a5a90;transform:rotate(90deg);transform-origin:0 0">270</div>
<div class="t" style="left:254.5px;top:1009.7px;font-size:9.5px;color:#0a5a90;-webkit-text-stroke:0.25px #0a5a90;transform:rotate(90deg);transform-origin:0 0">280</div>
<div class="t" style="left:254.5px;top:1039.1px;font-size:9.5px;color:#0a5a90;-webkit-text-stroke:0.25px #0a5a90;transform:rotate(90deg);transform-origin:0 0">290</div>
<div class="t" style="left:254.5px;top:1068.6px;font-size:9.5px;color:#0a5a90;-webkit-text-stroke:0.25px #0a5a90;transform:rotate(90deg);transform-origin:0 0">300</div>
<div class="a" style="left:241px;top:150px;width:22px;height:22px;background:#e8e8e8;border:1px solid #a8a8a8"></div>
<div class="t" style="left:243px;top:158px;font-size:10px;color:#222">mm</div>
<!-- page shadow -->
<div class="a" style="left:551px;top:169px;width:18px;height:908px;background:linear-gradient(to right,rgba(0,0,0,0),rgba(0,0,0,0.08) 40%,rgba(0,0,0,0.42))"></div>
<div class="a" style="left:1187px;top:169px;width:18px;height:908px;background:linear-gradient(to left,rgba(0,0,0,0),rgba(0,0,0,0.08) 40%,rgba(0,0,0,0.42))"></div>
<div class="a" style="left:569px;top:169px;width:618px;height:908px;background:#fbf8c3"></div>
<div class="a" style="left:583px;top:181px;width:591px;height:884px;background:#fff;border:2px solid #b80000"></div>
<!-- text object -->
<div class="t" style="left:658.5px;top:276px;font-size:90px;color:#000"><span style="display:inline-block;transform:scale(0.972);transform-origin:0 76.2px">T</span><span style="display:inline-block;margin-left:-11px;transform:scaleY(0.917);transform-origin:0 76.2px">ex</span>t</div>
<div class="a" style="left:658px;top:254px;width:25px;height:20px;background:#0a70e0"></div>
<div class="t" style="left:660px;top:260px;font-size:11.5px;color:#fff;letter-spacing:-0.3px">Text</div>
<div class="a" style="left:801px;top:254px;width:22px;height:20px;background:#0a70e0;box-shadow:3px 2px 6px rgba(0,0,0,0.3)"></div>
<svg style="left:806px;top:257px" width="12" height="14"><path d="M0 2H12M0 7H12M0 12H12" stroke="#fff" stroke-width="1.6"/></svg>
<svg style="left:640px;top:240px" width="200" height="145">
 <rect x="17.5" y="34.5" width="166" height="95.5" fill="none" stroke="#1a7ae0" stroke-width="1.4" stroke-dasharray="3 1"/>
 <path d="M100.5 12V34" stroke="#6a6ae0" stroke-width="1.2"/>
 <circle cx="100.5" cy="8.6" r="4" fill="#5a5ad8"/>
 <circle cx="17.5" cy="34.5" r="4.5" fill="#2a8ae8" stroke="#1a5aa0" stroke-width="0.8"/>
 <circle cx="183.5" cy="34.5" r="4.5" fill="#fff" stroke="#222" stroke-width="1"/>
 <circle cx="17.5" cy="130" r="4.5" fill="#fff" stroke="#222" stroke-width="1"/>
 <circle cx="183.5" cy="130" r="4.5" fill="#fff" stroke="#222" stroke-width="1"/>
 <rect x="97" y="31" width="7" height="7" fill="#fff" stroke="#111" stroke-width="1"/>
 <rect x="97" y="126.5" width="7" height="7" fill="#fff" stroke="#111" stroke-width="1"/>
 <rect x="14" y="78.5" width="7" height="7" fill="#fff" stroke="#111" stroke-width="1"/>
 <rect x="180" y="78.5" width="7" height="7" fill="#fff" stroke="#111" stroke-width="1"/>
</svg>
<!-- scrollbars -->
<div class="a" style="left:1499px;top:471px;width:11px;height:303px;background:#bdbdbd"></div>
<svg style="left:1499px;top:172px" width="11" height="7"><path d="M0 6H10L5 1Z" fill="#8c8c8c"/></svg>
<svg style="left:1499px;top:1066px" width="11" height="7"><path d="M0 1H10L5 6Z" fill="#8c8c8c"/></svg>
<div class="a" style="left:631px;top:1078px;width:495px;height:11px;background:#bdbdbd"></div>
<svg style="left:262px;top:1078px" width="7" height="11"><path d="M6 0V10L1 5Z" fill="#8c8c8c"/></svg>
<svg style="left:1488px;top:1078px" width="7" height="11"><path d="M1 0V10L6 5Z" fill="#8c8c8c"/></svg>
<div class="a" style="left:1513px;top:147px;width:5px;height:978px;background:#f0f0f0"></div>
<div class="a" style="left:1513px;top:621px;width:5px;height:30px;background:#d4d4d4"></div>
<!-- label design tab -->
<div class="a" style="left:237px;top:1093px;width:1276px;height:32px;background:#f0f0f0"></div>
<div class="a" style="left:243px;top:1092px;width:96px;height:28px;background:#e6e6e6;border:1px solid #9a9a9a;border-top:none;border-bottom:2px solid #1a2a8a"></div>
<div class="t" style="left:249px;top:1099px;font-size:13.4px;font-weight:bold;color:#15207a">Label Design</div>




<!-- ===== properties panel ===== -->
<div class="a" style="left:1518px;top:147px;width:400px;height:978px;background:#0f1c77"></div>
<div class="a" style="left:1520px;top:210px;width:396px;height:913px;background:#fff"></div>
<div class="a" style="left:1520px;top:210px;width:396px;height:28px;background:#f0f0f0"></div>
<svg style="left:1524px;top:155px" width="12" height="12"><path d="M0 1.5H12M0 6.5H12M0 11.5H12" stroke="#fff" stroke-width="1.7"/></svg>
<div class="t" style="left:1544px;top:154px;font-size:13.6px;color:#fff">Properties - Text [Text]</div>
<svg style="left:1869px;top:152px" width="19" height="18"><path d="M12.5 1.5L17.5 6.5L14.5 8.5L12.5 11.5L9.5 14.5L8 12.5L1.5 17L5.5 10.5L4 8.5L6.5 5.5L10 4Z" fill="#9098c0"/></svg>
<svg style="left:1898px;top:155px" width="12" height="12"><path d="M1 1L11 11M11 1L1 11" stroke="#9aa0c8" stroke-width="2.2"/></svg>
<!-- tabs -->
<div class="a" style="left:1523px;top:208px;width:50px;height:1px;background:#5a86c8"></div>
<div class="a" style="left:1577px;top:208px;width:39px;height:1px;background:#5a86c8"></div>
<div class="a" style="left:1680px;top:208px;width:55px;height:1px;background:#5a86c8"></div>
<div class="a" style="left:1619px;top:186px;width:58px;height:24px;background:#f0f0f0"></div>
<div class="t" style="left:1529.5px;top:192.5px;font-size:12.3px;color:#fff;-webkit-text-stroke:0.35px #fff;transform:scaleX(0.93);transform-origin:left">Source</div>
<div class="t" style="left:1583px;top:192.5px;font-size:12.3px;color:#fff;-webkit-text-stroke:0.35px #fff;transform:scaleX(0.93);transform-origin:left">Style</div>
<div class="t" style="left:1627.5px;top:192.5px;font-size:12px;color:#1a2a8a">Position</div>
<div class="t" style="left:1686.5px;top:192.5px;font-size:12.3px;color:#fff;-webkit-text-stroke:0.35px #fff;transform:scaleX(0.93);transform-origin:left">General</div>
<!-- subtabs -->
<div class="t" style="left:1534px;top:219px;font-size:11.8px;color:#1a2a8a">Position</div>
<div class="a" style="left:1534px;top:236px;width:42px;height:2px;background:#15207a"></div>
<div class="t" style="left:1588px;top:219px;font-size:11.6px;color:#222">Relative Position</div>
<!-- X Y -->
<div class="t" style="left:1536px;top:255px;font-size:11.8px;color:#222">X:</div>
<div class="t" style="left:1536px;top:281px;font-size:11.8px;color:#222">Y:</div>
<div class="a" style="left:1676px;top:248px;width:121px;height:23px;background:#fff;border:1px solid #ababab"></div>
<div class="a" style="left:1777px;top:248px;width:1px;height:23px;background:#ababab"></div>
<div class="t" style="left:1679px;top:254px;font-size:11.7px;color:#111">25.10 mm</div>
<div class="a" style="left:1676px;top:274px;width:121px;height:23px;background:#fff;border:1px solid #ababab"></div>
<div class="a" style="left:1777px;top:274px;width:1px;height:23px;background:#ababab"></div>
<div class="t" style="left:1679px;top:280px;font-size:11.7px;color:#111">31.78 mm</div>
<svg style="left:1782px;top:251px" width="9" height="44" fill="none" stroke="#111" stroke-width="1.8"><path d="M1.2 5.5L4.5 2.2L7.8 5.5M1.2 10.5L4.5 13.8L7.8 10.5M1.2 31.5L4.5 28.2L7.8 31.5M1.2 36.5L4.5 39.8L7.8 36.5"/></svg>
<!-- Size -->
<div class="t" style="left:1528px;top:311px;font-size:11.6px;color:#15207a">Size</div>
<div class="a" style="left:1557px;top:318px;width:351px;height:1px;background:#d8d8d8"></div>
<div class="t" style="left:1536px;top:336px;font-size:11.8px;color:#9a9a9a">Width:</div>
<div class="t" style="left:1536px;top:362px;font-size:11.8px;color:#9a9a9a">Height:</div>
<div class="a" style="left:1676px;top:330px;width:121px;height:23px;background:#f0f0f0;border:1px solid #ababab"></div>
<div class="a" style="left:1777px;top:330px;width:1px;height:23px;background:#ababab"></div>
<div class="t" style="left:1679px;top:336px;font-size:11.7px;color:#8a8a8a">56.11 mm</div>
<div class="a" style="left:1676px;top:356px;width:121px;height:23px;background:#f0f0f0;border:1px solid #ababab"></div>
<div class="a" style="left:1777px;top:356px;width:1px;height:23px;background:#ababab"></div>
<div class="t" style="left:1679px;top:362px;font-size:11.7px;color:#8a8a8a">32.14 mm</div>
<svg style="left:1782px;top:333px" width="9" height="44" fill="none" stroke="#9a9a9a" stroke-width="1.3"><path d="M1 5L4.5 1.5L8 5M1 11L4.5 14.5L8 11M1 31L4.5 27.5L8 31M1 37L4.5 40.5L8 37"/></svg>
<svg style="left:1894px;top:332px" width="17" height="16"><path d="M2 0H15Q17 0 17 2V10Q17 12 15 12H10L8 14.5L6 12H2Q0 12 0 10V2Q0 0 2 0Z" fill="#dce8f6"/><text x="8.5" y="9.5" font-size="9" text-anchor="middle" fill="#fff" font-family="Liberation Sans">?</text></svg>
<div class="a" style="left:1536px;top:383px;width:14px;height:14px;background:#fff;border:1px solid #c4c4c4"></div>
<div class="t" style="left:1556px;top:384px;font-size:11.4px;color:#9a9a9a">Keep aspect ratio</div>
<!-- rotation -->
<div class="t" style="left:1528px;top:406px;font-size:11.9px;color:#15207a">Rotation angle</div>
<div class="a" style="left:1613px;top:412px;width:295px;height:1px;background:#d8d8d8"></div>
<div class="a" style="left:1537px;top:423px;width:80px;height:22px;background:#fff;border:1px solid #ababab"></div>
<div class="a" style="left:1598px;top:423px;width:1px;height:22px;background:#ababab"></div>
<div class="t" style="left:1580px;top:428px;font-size:11.7px;color:#111">0.0</div>
<svg style="left:1603px;top:426px" width="9" height="16" fill="none" stroke="#111" stroke-width="1.8"><path d="M1.2 5.5L4.5 2.2L7.8 5.5M1.2 10.5L4.5 13.8L7.8 10.5"/></svg>
<div class="t" style="left:1676px;top:428px;font-size:11.7px;color:#333">0</div>
<div class="a" style="left:1690px;top:432px;width:180px;height:2.5px;background:#a0a0a0"></div>
<div class="a" style="left:1684px;top:425px;width:8.5px;height:18px;background:#a8a8a8;border-radius:2px"></div>
<div class="t" style="left:1872px;top:428px;font-size:11.2px;color:#333">359</div>
<!-- anchoring -->
<div class="t" style="left:1528px;top:454px;font-size:12.1px;color:#15207a">Anchoring point</div>
<div class="a" style="left:1622px;top:460px;width:286px;height:1px;background:#d8d8d8"></div>
<svg style="left:1536px;top:474px" width="101" height="52">
 <rect x="6.5" y="6.5" width="88" height="40" fill="none" stroke="#111" stroke-width="1"/>
 <g fill="#fff" stroke="#c2c2c2" stroke-width="1">
 <rect x="45.5" y="2.5" width="9" height="9"/><rect x="90.5" y="2.5" width="9" height="9"/>
 <rect x="1.5" y="22.5" width="9" height="9"/><rect x="45.5" y="22.5" width="9" height="9"/><rect x="90.5" y="22.5" width="9" height="9"/>
 <rect x="1.5" y="42.5" width="9" height="9"/><rect x="45.5" y="42.5" width="9" height="9"/><rect x="90.5" y="42.5" width="9" height="9"/>
 </g>
 <rect x="1.5" y="1.5" width="9" height="9" fill="#0a7a0a" stroke="#c2c2c2"/>
</svg>
<svg style="left:1894px;top:474px" width="17" height="16"><path d="M2 0H15Q17 0 17 2V10Q17 12 15 12H10L8 14.5L6 12H2Q0 12 0 10V2Q0 0 2 0Z" fill="#dce8f6"/><text x="8.5" y="9.5" font-size="9" text-anchor="middle" fill="#fff" font-family="Liberation Sans">?</text></svg>
<!-- design behavior -->
<div class="t" style="left:1528px;top:538px;font-size:11.8px;color:#15207a">Design behavior</div>
<div class="a" style="left:1622px;top:544px;width:286px;height:1px;background:#d8d8d8"></div>
<div class="a" style="left:1536px;top:559px;width:14px;height:14px;background:#fff;border:1px solid #555"></div>
<div class="t" style="left:1556px;top:562px;font-size:11.5px;color:#111">Lock</div>
<svg style="left:1894px;top:558px" width="17" height="16"><path d="M2 0H15Q17 0 17 2V10Q17 12 15 12H10L8 14.5L6 12H2Q0 12 0 10V2Q0 0 2 0Z" fill="#dce8f6"/><text x="8.5" y="9.5" font-size="9" text-anchor="middle" fill="#fff" font-family="Liberation Sans">?</text></svg>

<!-- ===== status bar ===== -->
<svg style="left:1450px;top:1133px" width="17" height="17"><rect x="3.5" y="0.5" width="10" height="4" fill="none" stroke="#555"/><path d="M1 5H16V12H1Z" fill="#6a6a6a"/><rect x="4" y="9" width="9" height="7" fill="#fff" stroke="#555"/></svg>
<div class="a" style="left:1475px;top:1131px;width:179px;height:21px;background:#f0f0f0;border:1px solid #bdbdbd"></div>
<div class="t" style="left:1483px;top:1136px;font-size:11.6px;color:#111">MAX CPM-200E</div>
<svg style="left:1638px;top:1139px" width="8" height="5"><path d="M0 0H8L4 4Z" fill="#111"/></svg>
<svg style="left:1669px;top:1134px" width="17" height="16" fill="none" stroke="#555" stroke-width="1.3"><path d="M0.5 4V0.5H4M13 0.5H16.5V4M16.5 12V15.5H13M4 15.5H0.5V12"/><rect x="3.5" y="5" width="10" height="6.5" fill="#555" stroke="none"/></svg>
<svg style="left:1701px;top:1134px" width="17" height="16" fill="none" stroke="#555" stroke-width="1.3"><path d="M0.5 4V0.5H4M13 0.5H16.5V4M16.5 12V15.5H13M4 15.5H0.5V12"/><rect x="3.5" y="4.5" width="4" height="2.5" fill="#555" stroke="none"/><rect x="9.5" y="4.5" width="4" height="2.5" fill="#555" stroke="none"/><rect x="3.5" y="9" width="4" height="2.5" fill="#555" stroke="none"/><rect x="9.5" y="9" width="4" height="2.5" fill="#555" stroke="none"/></svg>
<div class="a" style="left:1729px;top:1141px;width:9px;height:2px;background:#555"></div>
<div class="a" style="left:1740px;top:1141px;width:100px;height:2px;background:#6a6a6a"></div>
<div class="a" style="left:1777px;top:1137px;width:3px;height:9px;background:#555"></div>
<svg style="left:1844px;top:1137px" width="10" height="10"><path d="M5 0V10M0 5H10" stroke="#555" stroke-width="2"/></svg>
<div class="t" style="left:1873px;top:1137px;font-size:11.2px;color:#6a7080">78%</div>

<!-- ===== callouts ===== -->
<svg style="left:0;top:0" width="1920" height="1160" fill="none" stroke="#17335f" stroke-width="4" stroke-linejoin="miter" stroke-miterlimit="4">
 <path d="M286.7 399.7 H536.3 Q552.3 399.7 552.3 409.7 V511 Q552.3 521 536.3 521 H286.7 Q270.7 521 270.7 511 V440 L111 373 L270.7 428 V409.7 Q270.7 399.7 286.7 399.7 Z"/>
 <path d="M285 620.3 H533.6 Q549.6 620.3 549.6 630.3 V732 Q549.6 742 533.6 742 H285 Q269 742 269 732 V661 L108.5 593.5 L269 650 V630.3 Q269 620.3 285 620.3 Z"/>
 <path d="M771.6 479.3 H1037.3 Q1053.3 479.3 1053.3 489.3 V591.3 Q1053.3 601.3 1037.3 601.3 H771.6 Q755.6 601.3 755.6 591.3 V489.3 Q755.6 479.3 771.6 479.3 Z"/>
 <path d="M1225.3 310.2 H1491.4 Q1507.4 310.2 1507.4 320.2 V337 L1624.8 308.7 L1507.4 352 V421.7 Q1507.4 431.7 1491.4 431.7 H1225.3 Q1209.3 431.7 1209.3 421.7 V320.2 Q1209.3 310.2 1225.3 310.2 Z"/>
 <path d="M1228 912 H1448 Q1464 912 1464 922 V1009.8 Q1464 1019.8 1448 1019.8 H1407 L1515.3 1134.3 L1381 1019.8 H1228 Q1212 1019.8 1212 1009.8 V922 Q1212 912 1228 912 Z"/>
</svg>
<div class="t" style="left:409.5px;top:444px;font-size:31.5px;color:#000;transform:translateX(-50%) scaleX(0.84)">Object toolbox</div>
<div class="t" style="left:408px;top:665.7px;font-size:31.5px;color:#000;transform:translateX(-50%) scaleX(0.84)">Data source explorer</div>
<div class="t" style="left:903px;top:523.7px;font-size:31.5px;color:#000;transform:translateX(-50%) scaleX(0.84)">Design surface</div>
<div class="t" style="left:1357px;top:355.4px;font-size:31.5px;color:#000;transform:translateX(-50%) scaleX(0.84)">Property editor</div>
<div class="t" style="left:1336.5px;top:931px;font-size:31.5px;color:#000;transform:translateX(-50%) scaleX(0.84)">Printer and status</div>
<div class="t" style="left:1336px;top:968.5px;font-size:31.5px;color:#000;transform:translateX(-50%) scaleX(0.84)">bar</div>
</body></html>
